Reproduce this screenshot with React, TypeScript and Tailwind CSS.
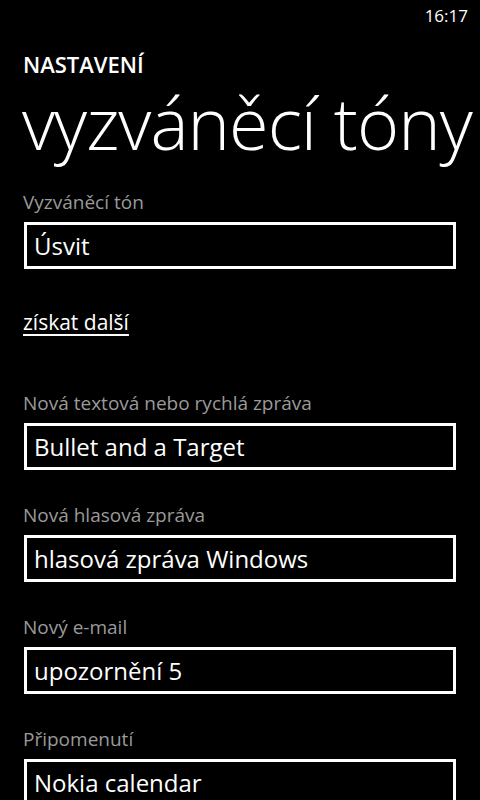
import React from "react";

const font = { fontFamily: '"Open Sans", "Noto Sans", sans-serif' };

function Field({ label, value }: { label: string; value: string }) {
  return (
    <div className="flex flex-col">
      <div className="h-[37px] pl-[23px] text-[19px] leading-[37px] text-[#9a9a9a]">{label}</div>
      <div className="ml-[24px] mt-[1px] flex h-[47px] w-[432px] items-center border-[3px] border-white pl-[7px] text-[24px] text-white">
        {value}
      </div>
    </div>
  );
}

export default function App() {
  return (
    <div className="h-[800px] w-[480px] overflow-hidden bg-black text-white" style={font}>
      <div className="flex h-[32px] items-center justify-end pr-[12px] text-[17px]">16:17</div>
      <div className="mt-[17px] pl-[23px] text-[22px] font-semibold leading-[30px]">NASTAVENÍ</div>
      <div className="mt-[3px] pl-[22px] text-[72px] font-light leading-[80px] tracking-[-1px]">vyzváněcí tóny</div>
      <div className="mt-[22px]">
        <Field label="Vyzváněcí tón" value="Úsvit" />
      </div>
      <div className="mt-[38px] pl-[23px] text-[21px] leading-[30px] underline underline-offset-[4px]">získat další</div>
      <div className="mt-[48px] flex flex-col gap-[27px]">
        <Field label="Nová textová nebo rychlá zpráva" value="Bullet and a Target" />
        <Field label="Nová hlasová zpráva" value="hlasová zpráva Windows" />
        <Field label="Nový e-mail" value="upozornění 5" />
        <Field label="Připomenutí" value="Nokia calendar" />
      </div>
    </div>
  );
}
